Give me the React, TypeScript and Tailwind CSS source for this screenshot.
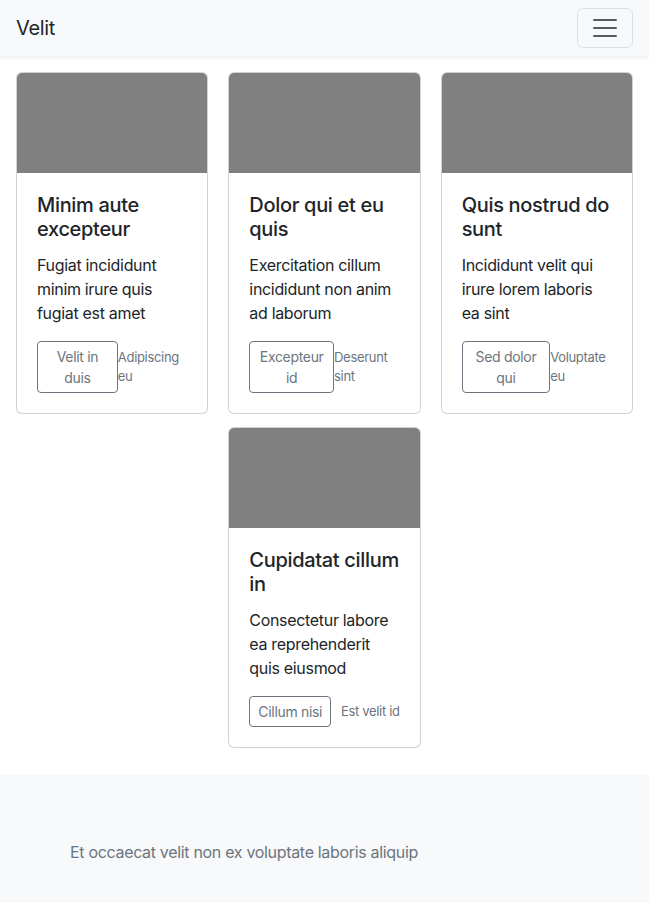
const cards = [
  { title: 'Minim aute excepteur', text: 'Fugiat incididunt minim irure quis fugiat est amet', button: 'Velit in duis', note: 'Adipiscing eu' },
  { title: 'Dolor qui et eu quis', text: 'Exercitation cillum incididunt non anim ad laborum', button: 'Excepteur id', note: 'Deserunt sint' },
  { title: 'Quis nostrud do sunt', text: 'Incididunt velit qui irure lorem laboris ea sint', button: 'Sed dolor qui', note: 'Voluptate eu' },
  { title: 'Cupidatat cillum in', text: 'Consectetur labore ea reprehenderit quis eiusmod', button: 'Cillum nisi', note: 'Est velit id' },
];

const App = () => {
  return (
    <div className="min-h-screen bg-white text-[#212529] font-['Inter',sans-serif] tracking-[-0.02em]">
      <nav className="h-14 bg-[#f8f9fa] shadow-[0_2px_4px_rgba(0,0,0,0.075)] flex items-center justify-between px-4 relative z-10">
        <span className="text-xl leading-[30px]">Velit</span>
        <button className="w-14 h-10 border border-black/10 rounded-md flex items-center justify-center">
          <svg width="30" height="30" viewBox="0 0 30 30">
            <path d="M4 7h22M4 15h22M4 23h22" stroke="rgba(33,37,41,0.75)" strokeWidth="2" strokeLinecap="round" strokeMiterlimit="10" />
          </svg>
        </button>
      </nav>

      <main className="px-4 pt-4 pb-[27px]">
        <div className="flex flex-wrap justify-center gap-x-5 gap-y-[13px]">
          {cards.map((card) => (
            <div key={card.title} className="w-[calc((100%-40px)/3)] border border-black/[0.175] rounded-md bg-white">
              <div className="h-[100px] bg-[#808080] rounded-t-[5px]"></div>
              <div className="p-5">
                <h5 className="text-xl font-medium leading-6 mb-3">{card.title}</h5>
                <p className="text-base leading-6 mb-4">{card.text}</p>
                <div className="flex items-center justify-between">
                  <button className="border border-[#6c757d] text-[#6c757d] rounded text-sm leading-[21px] px-2 py-1">
                    {card.button}
                  </button>
                  <small className="text-[13px] leading-[19px] text-[#6c757d]">{card.note}</small>
                </div>
              </div>
            </div>
          ))}
        </div>
      </main>

      <footer className="bg-[#f8f9fa] pt-[65px] pb-10 pl-[70px] pr-4">
        <p className="text-base leading-6 text-[#6c757d]">Et occaecat velit non ex voluptate laboris aliquip</p>
      </footer>
    </div>
  );
};

export default App;
